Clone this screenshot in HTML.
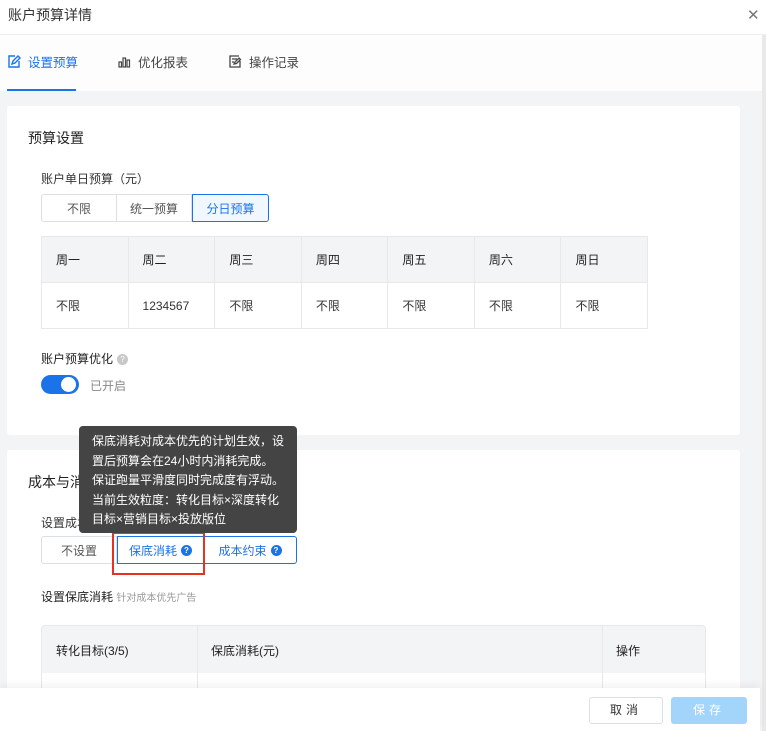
<!DOCTYPE html>
<html><head><meta charset="utf-8"><style>
*{box-sizing:border-box;margin:0;padding:0}
body{width:766px;height:731px;overflow:hidden;background:#fff;font-family:"Liberation Sans","Noto Sans CJK SC",sans-serif;color:#333;font-size:12px;position:relative}
.abs{position:absolute}
.hdr{left:0;top:0;width:766px;height:35px;border-bottom:1px solid #eceef0;background:#fff}
.hdr .t{left:8px;top:5px;font-size:14px;color:#333}
.tabs{left:0;top:35px;width:762px;height:56px;background:#fdfdfd}
.tab{top:17px;font-size:12.5px;color:#444;display:flex;align-items:center;gap:7px}
.gray{left:0;top:91px;width:762px;height:640px;background:#f3f4f6}
.card{background:#fff;left:7px;width:733px;border-radius:3px}
.seg{display:flex;position:absolute;height:28px}
.seg div{border:1px solid #dcdfe4;display:flex;align-items:center;justify-content:center;color:#555;font-size:12px;background:#fff}
table{border-collapse:collapse;position:absolute;left:41px;top:236px;width:607px}
td{border:1px solid #e6e8eb;height:46px;padding-left:14px;font-size:12px;color:#333;width:87px}
tr:first-child td{background:#f3f4f6;color:#222}
.q{display:inline-block;width:11px;height:11px;border-radius:50%;background:#1a73e8;color:#fff;font-size:8px;line-height:11px;text-align:center;font-weight:bold;vertical-align:middle;margin-left:4px}
</style></head><body>
<div class="abs hdr"><div class="abs t">账户预算详情</div>
<div class="abs" style="left:747px;top:6px;font-size:15px;color:#777">✕</div></div>
<div class="abs tabs">
 <div class="abs tab" style="left:8px;color:#1a73e8"><svg width="13" height="13" viewBox="0 0 13 13" fill="none" stroke="#1a73e8" stroke-width="1.4"><path d="M11 6v6H1V1h6"/><path d="M4 9l1-3 5-5 2 2-5 5z"/></svg>设置预算</div>
 <div class="abs tab" style="left:118px"><svg width="13" height="12" viewBox="0 0 13 12" fill="none" stroke="#444" stroke-width="1.2"><rect x="1" y="6" width="2.5" height="5"/><rect x="5" y="2" width="2.5" height="9"/><rect x="9" y="4" width="2.5" height="7"/></svg>优化报表</div>
 <div class="abs tab" style="left:229px"><svg width="13" height="13" viewBox="0 0 13 13" fill="none" stroke="#444" stroke-width="1.3"><path d="M11 6v6H1V1h9"/><path d="M3 4h5M3 7h2M5 9l1-2 4-4 1.5 1.5-4 4z"/></svg>操作记录</div>
 <div class="abs" style="left:7px;top:54px;width:69px;height:2px;background:#1a73e8"></div>
</div>
<div class="abs gray"></div>
<div class="abs" style="left:762px;top:35px;width:4px;height:696px;background:#e9e9ea"></div>
<div class="abs card" style="top:106px;height:329px">
 <div class="abs" style="left:21px;top:22px;font-size:14px;color:#222">预算设置</div>
 <div class="abs" style="left:34px;top:64px;font-size:12px;color:#333">账户单日预算（元）</div>
</div>
<div class="seg" style="left:41px;top:194px">
 <div style="width:76px;border-radius:3px 0 0 3px">不限</div>
 <div style="width:75px;border-left:none">统一预算</div>
 <div style="width:77px;border-color:#1a73e8;color:#1a73e8;background:#f0f7ff;border-radius:0 3px 3px 0">分日预算</div>
</div>
<table><tr><td>周一</td><td>周二</td><td>周三</td><td>周四</td><td>周五</td><td>周六</td><td>周日</td></tr>
<tr><td>不限</td><td>1234567</td><td>不限</td><td>不限</td><td>不限</td><td>不限</td><td>不限</td></tr></table>
<div class="abs" style="left:41px;top:350px;font-size:12px;color:#222">账户预算优化<span style="display:inline-block;width:11px;height:11px;border-radius:50%;background:#c8c8c8;color:#fff;font-size:8px;line-height:11px;text-align:center;margin-left:4px;vertical-align:middle">?</span></div>
<div class="abs" style="left:41px;top:375px;width:38px;height:19px;border-radius:10px;background:#1a73e8"><div class="abs" style="left:20px;top:2px;width:15px;height:15px;border-radius:50%;background:#fff"></div></div>
<div class="abs" style="left:90px;top:377px;color:#888">已开启</div>
<div class="abs card" style="top:450px;height:281px">
 <div class="abs" style="left:21px;top:22px;font-size:14px;color:#222">成本与消耗</div>
 <div class="abs" style="left:34px;top:64px;color:#333">设置成本与消耗</div>
 <div class="abs" style="left:34px;top:138px;color:#222">设置保底消耗 <span style="font-size:10px;color:#999">针对成本优先广告</span></div>
</div>
<div class="seg" style="left:41px;top:536px">
 <div style="width:76px;border-radius:3px 0 0 3px">不设置</div>
 <div style="width:87px;border-color:#1a73e8;color:#1a73e8;border-left:1px solid #1a73e8">保底消耗<span class="q">?</span></div>
 <div style="width:93px;border-color:#1a73e8;color:#1a73e8;border-left:none;border-radius:0 3px 3px 0">成本约束<span class="q">?</span></div>
</div>
<div class="abs" style="left:112px;top:532px;width:93px;height:43px;border:2px solid #e8321e"></div>
<div class="abs" style="left:79px;top:426px;width:218px;height:107px;background:#444;border-radius:4px;color:#fff;font-size:12px;line-height:19.5px;padding:6px 0 0 13px;white-space:nowrap">保底消耗对成本优先的计划生效，设<br>置后预算会在24小时内消耗完成。<br>保证跑量平滑度同时完成度有浮动。<br>当前生效粒度：转化目标×深度转化<br>目标×营销目标×投放版位</div>
<div class="abs" style="left:41px;top:625px;width:665px;height:64px;border:1px solid #e6e8eb;border-radius:4px 4px 0 0;overflow:hidden">
 <div class="abs" style="left:0;top:0;width:665px;height:47px;background:#f3f4f6"></div>
 <div class="abs" style="left:155px;top:0;width:1px;height:64px;background:#e6e8eb"></div>
 <div class="abs" style="left:560px;top:0;width:1px;height:64px;background:#e6e8eb"></div>
 <div class="abs" style="left:14px;top:16px;color:#222">转化目标(3/5)</div>
 <div class="abs" style="left:169px;top:16px;color:#222">保底消耗(元)</div>
 <div class="abs" style="left:574px;top:16px;color:#222">操作</div>
</div>
<div class="abs" style="left:0;top:688px;width:760px;height:43px;background:#fff;box-shadow:0 -3px 8px rgba(0,0,0,0.06)"></div>
<div class="abs" style="left:589px;top:697px;width:74px;height:27px;border:1px solid #dcdfe4;border-radius:3px;text-align:center;line-height:25px;color:#333;letter-spacing:4px;background:#fff">取消</div>
<div class="abs" style="left:671px;top:697px;width:76px;height:27px;border-radius:3px;text-align:center;line-height:27px;color:#fff;letter-spacing:4px;background:#a3d5fa">保存</div>
</body></html>
